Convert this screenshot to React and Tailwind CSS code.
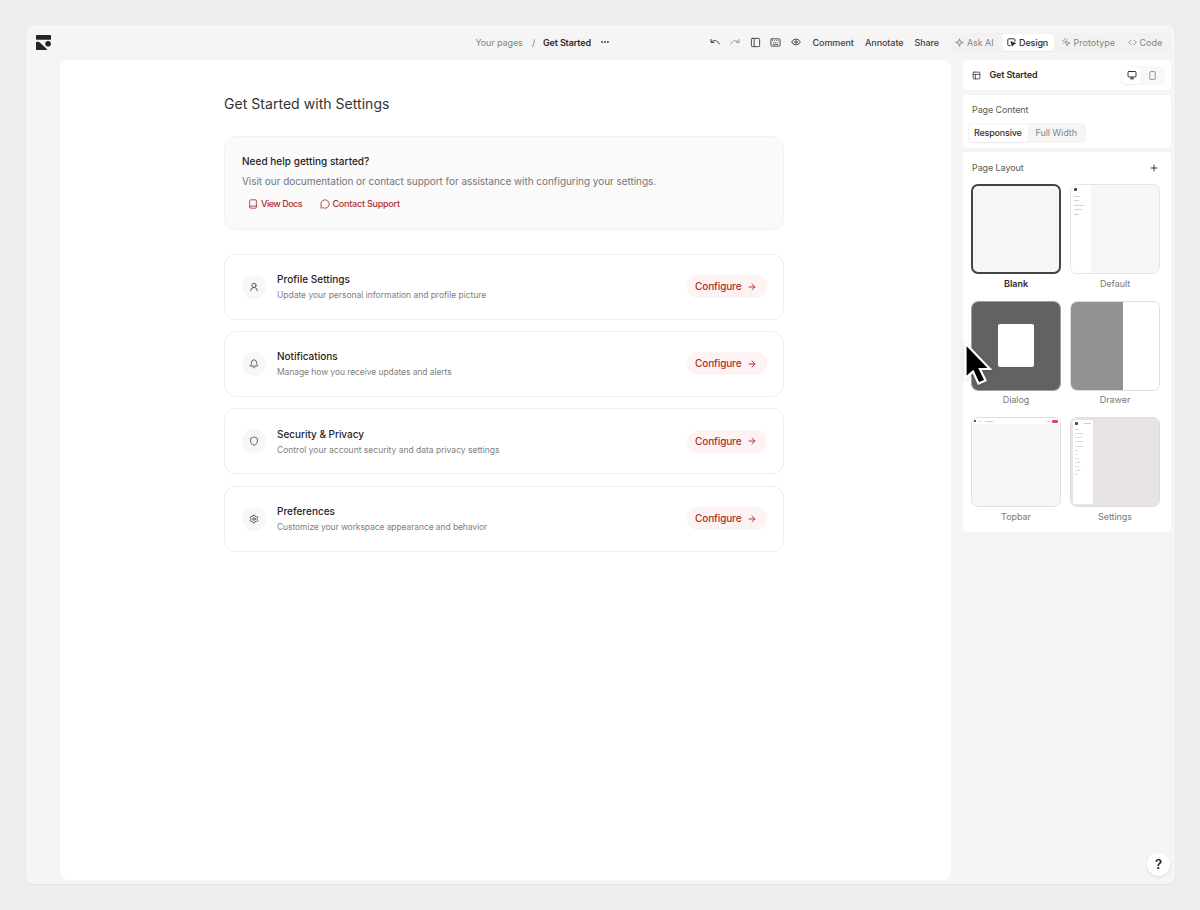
import {
  ArrowRight,
  Bell,
  Book,
  Code,
  Ellipsis,
  Eye,
  Keyboard,
  MessageCircle,
  MousePointerClick,
  PanelLeft,
  PanelsTopLeft,
  Plus,
  Settings,
  Shield,
  UserRound,
} from 'lucide-react';

const settings = [
  {
    icon: UserRound,
    title: 'Profile Settings',
    text: 'Update your personal information and profile picture',
    titleTracking: 'tracking-[0.03px]',
    textTracking: 'tracking-[-0.02px]',
  },
  {
    icon: Bell,
    title: 'Notifications',
    text: 'Manage how you receive updates and alerts',
    titleTracking: 'tracking-[-0.02px]',
    textTracking: 'tracking-[-0.07px]',
  },
  {
    icon: Shield,
    title: 'Security & Privacy',
    text: 'Control your account security and data privacy settings',
    titleTracking: 'tracking-[-0.03px]',
    textTracking: 'tracking-[0px]',
  },
  {
    icon: Settings,
    title: 'Preferences',
    text: 'Customize your workspace appearance and behavior',
    titleTracking: 'tracking-[0px]',
    textTracking: 'tracking-[-0.09px]',
  },
];

function Logo() {
  return (
    <svg viewBox="0 0 15 15" className="w-[15px] h-[15px]" fill="#242424">
      <rect width="15" height="4.8" rx="0.7" />
      <path d="M0 7.6Q0 6.8 .8 6.8H2.3Q3 6.8 3.5 7.3L10.6 13.8Q11.4 15 10.3 15H.8Q0 15 0 14.2Z" />
      <circle cx="12.1" cy="8.8" r="2.8" />
    </svg>
  );
}

function UndoArrow({ className }) {
  return (
    <svg
      viewBox="0 0 10 10"
      className={`h-[10px] w-[10px] ${className}`}
      fill="none"
      stroke="currentColor"
      strokeWidth="1"
      strokeLinecap="round"
      strokeLinejoin="round"
    >
      <path d="M1 2.5V5.4H3.9M1.2 5.2C3.6 2.5 7.6 3 9.2 6.9" />
    </svg>
  );
}

function Spark() {
  return (
    <svg
      viewBox="0 0 9 9"
      className="h-[9px] w-[9px]"
      fill="none"
      stroke="currentColor"
      strokeWidth="1"
      strokeLinejoin="round"
    >
      <path d="M4.5 .8L5.4 3.6L8.2 4.5L5.4 5.4L4.5 8.2L3.6 5.4L.8 4.5L3.6 3.6Z" />
    </svg>
  );
}

function DesignIcon() {
  return (
    <svg
      viewBox="0 0 9 9"
      className="h-[9px] w-[9px]"
      fill="none"
      stroke="currentColor"
      strokeWidth="1"
      strokeLinecap="round"
      strokeLinejoin="round"
    >
      <path d="M3.2 7.7H1.8Q.8 7.7 .8 6.7V1.8Q.8 .8 1.8 .8H6.9Q7.9 .8 7.9 1.8V3.4" />
      <path d="M4 4L5.4 8.2L6.2 6.4L8.2 5.6Z" fill="currentColor" />
    </svg>
  );
}

function MonitorIcon() {
  return (
    <svg
      viewBox="0 0 10 10"
      className="h-[10px] w-[10px]"
      fill="none"
      stroke="currentColor"
      strokeWidth="1"
      strokeLinecap="round"
    >
      <rect x="1" y="1.5" width="8" height="5.5" rx="1" />
      <path d="M5 7V8.7M3.4 8.8H6.6" />
    </svg>
  );
}

function TopBar() {
  return (
    <header className="flex h-[34.5px] items-center pl-[10px] text-[9px] leading-none font-medium text-[#3f3f3f]">
      <Logo />
      <nav className="ml-[424.5px] flex w-[234px] items-center whitespace-nowrap">
        <span className="w-[56.5px] font-normal tracking-[-0.1px] text-[#858585]">
          Your pages
        </span>
        <span className="w-[11px] font-normal text-[#777]">/</span>
        <span className="w-[57px] font-semibold tracking-[-0.15px] text-[#2b2b2b]">
          Get Started
        </span>
        <Ellipsis size={10} strokeWidth={2.6} />
      </nav>
      <div className="flex w-[241px] items-center">
        <UndoArrow className="mr-[10px]" />
        <UndoArrow className="mr-[10px] -scale-x-100 text-[#9b9b9b]" />
        <PanelLeft size={11} className="mr-[9.5px]" />
        <Keyboard size={11} className="mr-[9.5px]" />
        <Eye size={10} strokeWidth={2.3} className="mr-[12px]" />
        <span className="w-[52.5px] tracking-[-0.08px]">Comment</span>
        <span className="w-[49.5px] tracking-[-0.08px]">Annotate</span>
        <span className="tracking-[-0.08px]">Share</span>
      </div>
      <div className="flex h-[19px] w-[220px] items-center rounded bg-[#f2f2f2] font-normal text-[#858585]">
        <span className="flex w-[51.5px] items-center gap-[3px] pl-[4.5px] tracking-[-0.1px]">
          <Spark />
          Ask AI
        </span>
        <span className="flex h-[17px] w-[51.5px] items-center gap-[3px] rounded bg-white pl-[5px] font-medium tracking-[-0.12px] text-[#303030] shadow-xs">
          <DesignIcon />
          Design
        </span>
        <span className="flex w-[74.5px] items-center gap-[2.5px] pl-[8.5px]">
          <MousePointerClick size={9} strokeWidth={2.3} />
          Prototype
        </span>
        <span className="flex items-center gap-[2.5px]">
          <Code size={9} strokeWidth={2.3} />
          Code
        </span>
      </div>
    </header>
  );
}

function HelpCard() {
  return (
    <section className="h-[94px] rounded-xl border border-[#f2f2f2] bg-[#fafafa] pt-[18px] pl-[17px] whitespace-nowrap">
      <h2 className="text-[10px] leading-[12px] font-medium tracking-[0.03px] text-[#252525]">
        Need help getting started?
      </h2>
      <p className="mt-[8px] text-[10px] leading-[13px] tracking-[-0.045px] text-[#777]">
        Visit our documentation or contact support for assistance with
        configuring your settings.
      </p>
      <div className="mt-[10px] flex items-center text-[9px] leading-[12px] font-medium text-[#ad2e32]">
        <span className="flex w-[73px] items-center gap-[3px] pl-[6px] tracking-[-0.5px]">
          <Book size={10} />
          View Docs
        </span>
        <span className="flex items-center gap-[2.5px] pl-[5px] tracking-[-0.24px]">
          <MessageCircle size={10} />
          Contact Support
        </span>
      </div>
    </section>
  );
}

function SettingRow({ item }) {
  const Icon = item.icon;
  return (
    <li className="flex h-[66px] items-center rounded-xl border border-[#eeeeee] px-[17px] whitespace-nowrap">
      <span className="flex size-[24px] items-center justify-center rounded-full bg-[#f7f7f7] text-[#505050]">
        <Icon size={10} strokeWidth={2.2} />
      </span>
      <div className="ml-[11px] flex-1 pt-px">
        <h3
          className={`text-[10px] leading-[14px] font-medium text-[#252525] ${item.titleTracking}`}
        >
          {item.title}
        </h3>
        <p
          className={`mt-[3px] text-[8.5px] leading-[13px] text-[#808080] ${item.textTracking}`}
        >
          {item.text}
        </p>
      </div>
      <button className="-mr-px flex h-[23px] w-[80px] items-center rounded-full bg-[#fdf3f2] pl-[8px] text-[10px] font-medium tracking-[-0.12px] text-[#ad2e32]">
        <span className="w-[52px] text-left">Configure</span>
        <ArrowRight size={10} strokeWidth={2.3} />
      </button>
    </li>
  );
}

function Canvas() {
  return (
    <main className="h-[820px] w-[891px] rounded-lg bg-white pt-[34px] pl-[164px]">
      <div className="w-[560px]">
        <h1 className="text-[14px] leading-[20px] tracking-[0.04px] text-[#333]">
          Get Started with Settings
        </h1>
        <div className="mt-[22px]">
          <HelpCard />
        </div>
        <ul className="mt-[23.5px] flex flex-col gap-[11.4px]">
          {settings.map((item) => (
            <SettingRow key={item.title} item={item} />
          ))}
        </ul>
      </div>
    </main>
  );
}

// small grey strokes standing in for menu items
function MenuLines({ widths }) {
  return (
    <div className="mt-[4px] flex flex-col gap-[3px]">
      {widths.map((w, i) => (
        <div key={i} className="h-px bg-[#dedede]" style={{ width: w }} />
      ))}
    </div>
  );
}

function DefaultPreview() {
  return (
    <div className="flex h-full bg-[#f6f6f6]">
      <div className="w-[20px] bg-white pt-[3px] pl-[3px]">
        <div className="size-[3px] rounded-[1px] bg-[#444]" />
        <div className="mt-[5px] flex flex-col gap-[3.4px]">
          {[6, 5, 10, 8, 5].map((w, i) => (
            <div
              key={i}
              className={i === 3 ? 'h-px bg-[#edc8ca]' : 'h-px bg-[#d2d2d2]'}
              style={{ width: w }}
            />
          ))}
        </div>
      </div>
    </div>
  );
}

function DialogPreview() {
  return (
    <div className="flex h-full items-center justify-center bg-[#626262]">
      <div className="h-[43px] w-[36px] rounded-[2px] bg-white" />
    </div>
  );
}

function DrawerPreview() {
  return (
    <div className="flex h-full bg-white">
      <div className="w-[52px] bg-[#929292]" />
    </div>
  );
}

function TopbarPreview() {
  return (
    <div className="h-full bg-[#f6f6f6]">
      <div className="flex h-[6px] items-center gap-[3px] bg-white px-[2px]">
        <div className="size-[2px] bg-[#555]" />
        <div className="h-px w-[3px] bg-[#ddd]" />
        <div className="h-px w-[8px] bg-[#ccc]" />
        <div className="ml-auto h-px w-[3px] bg-[#ccc]" />
        <div className="-ml-[1px] h-[3px] w-[6px] rounded-[1px] bg-[#d6505c]" />
      </div>
    </div>
  );
}

function SettingsPreview() {
  return (
    <div className="flex h-full bg-[#e7e4e3] p-[2px]">
      <div className="w-[20px] rounded-[2px] bg-white pt-[2px] pl-[2px]">
        <div className="flex items-center gap-[6px]">
          <div className="size-[3px] rounded-[1px] bg-[#444]" />
          <div className="h-px w-[7px] bg-[#ccc]" />
        </div>
        <MenuLines widths={[4, 9, 7, 8]} />
        <MenuLines widths={[8, 3, 3, 4, 5, 4, 6, 3]} />
      </div>
    </div>
  );
}

const layouts = [
  { name: 'Blank', preview: null, active: true },
  { name: 'Default', preview: <DefaultPreview />, border: 'border-[#e4e4e4]' },
  { name: 'Dialog', preview: <DialogPreview />, border: 'border-[#a0a0a0]' },
  { name: 'Drawer', preview: <DrawerPreview />, border: 'border-[#dedede]' },
  { name: 'Topbar', preview: <TopbarPreview />, border: 'border-[#dedede]' },
  { name: 'Settings', preview: <SettingsPreview />, border: 'border-[#dedbda]' },
];

function SidePanel() {
  return (
    <aside className="ml-[12px] flex w-[208px] flex-col text-[9px] leading-[12px] text-[#5a5a5a]">
      <section className="flex h-[30px] items-center rounded-[4px] bg-white pl-[9px]">
        <PanelsTopLeft size={9} strokeWidth={2.3} className="text-[#444]" />
        <span className="ml-[8.5px] font-semibold tracking-[-0.15px] text-[#2b2b2b]">
          Get Started
        </span>
        <div className="ml-auto mr-[6px] flex h-[19px] w-[44px] items-center rounded bg-[#f8f8f8] p-px">
          <span className="flex h-full w-[19px] items-center justify-center rounded bg-white text-[#333] shadow-xs">
            <MonitorIcon />
          </span>
          <span className="flex flex-1 items-center justify-center text-[#888]">
            <svg
              viewBox="0 0 7 9"
              className="h-[9px] w-[7px]"
              fill="none"
              stroke="currentColor"
              strokeWidth="0.9"
            >
              <rect x="0.8" y="0.6" width="5.4" height="7.8" rx="0.8" />
            </svg>
          </span>
        </div>
      </section>

      <section className="mt-[5px] h-[53px] rounded-[4px] bg-white pt-[9px]">
        <h2 className="pl-[9px] tracking-[-0.12px]">Page Content</h2>
        <div className="mt-[7px] ml-[5px] flex h-[20px] w-[118px] items-center rounded bg-[#f5f5f5] p-px">
          <span className="flex h-full w-[59px] items-center rounded bg-white pl-[5px] font-medium tracking-[-0.2px] text-[#333] shadow-xs">
            Responsive
          </span>
          <span className="pl-[7.5px] tracking-[-0.08px] text-[#858585]">
            Full Width
          </span>
        </div>
      </section>

      <section className="mt-[4px] h-[380px] rounded-[4px] bg-white pt-[10px]">
        <div className="flex items-center justify-between pr-[12px] pl-[9px]">
          <h2 className="tracking-[-0.1px]">Page Layout</h2>
          <Plus size={10} strokeWidth={2.3} className="text-[#333]" />
        </div>
        <div className="mt-[10px] ml-[8px] grid grid-cols-[90px_90px] gap-x-[9px] gap-y-[6.7px]">
          {layouts.map((layout) => (
            <div key={layout.name} className="h-[110px] text-center">
              <div
                className={`h-[90px] overflow-hidden rounded-[7px] ${
                  layout.active
                    ? 'border-2 border-[#444] bg-[#f6f6f6]'
                    : `border ${layout.border}`
                }`}
              >
                {layout.preview}
              </div>
              <p
                className={
                  layout.active
                    ? 'mt-[3.5px] font-semibold text-[#2b2b2b]'
                    : 'mt-[3.5px] tracking-[-0.05px] text-[#7a7a7a]'
                }
              >
                {layout.name}
              </p>
            </div>
          ))}
        </div>
      </section>
    </aside>
  );
}

export default function App() {
  return (
    <div className="relative h-[910px] w-[1200px] overflow-hidden bg-[#ededed] pt-[25px] pl-[26px] font-['Inter',sans-serif]">
      <div className="h-[859px] w-[1149px] rounded-lg bg-[#f5f5f5] shadow-xs">
        <TopBar />
        <div className="flex pt-[0.5px] pl-[34px]">
          <Canvas />
          <SidePanel />
        </div>
      </div>

      <button className="absolute top-[853px] left-[1147px] flex size-[23px] items-center justify-center rounded-full bg-white text-[13px] font-semibold text-[#222] shadow-sm">
        ?
      </button>

      {/* cursor */}
      <svg
        viewBox="0 0 32 46"
        className="absolute top-[340px] left-[960px] h-[46px] w-[32px] drop-shadow-sm"
      >
        <path
          d="M5.5 3.5V38L13 31.5L18.5 43.5L25.5 40.5L20 29H30Z"
          fill="#000"
          stroke="#fff"
          strokeWidth="2.2"
        />
      </svg>
    </div>
  );
}
